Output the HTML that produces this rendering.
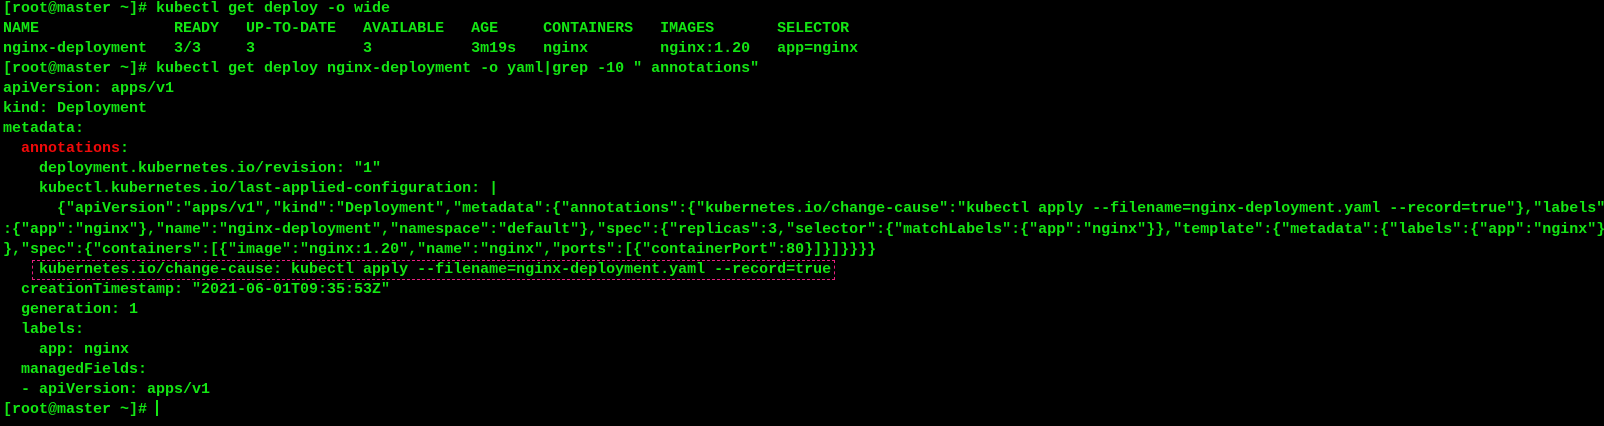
<!DOCTYPE html>
<html><head><meta charset="utf-8"><style>
html,body{margin:0;padding:0;background:#000;width:1604px;height:426px;overflow:hidden}
pre{margin:0;position:absolute;left:3px;top:-1px;font-family:"Liberation Mono",monospace;font-size:15px;line-height:20.05px;color:#14e614;font-weight:bold;white-space:pre}
.r{color:#f00a0a}
.box{position:absolute;left:32px;top:260px;width:801px;height:18px;border:1.5px dashed #e8207f}
.cur{display:inline-block;width:2px;height:16px;background:#14e614;vertical-align:-3px}
</style></head><body>
<pre>[root@master ~]# kubectl get deploy -o wide
NAME               READY   UP-TO-DATE   AVAILABLE   AGE     CONTAINERS   IMAGES       SELECTOR
nginx-deployment   3/3     3            3           3m19s   nginx        nginx:1.20   app=nginx
[root@master ~]# kubectl get deploy nginx-deployment -o yaml|grep -10 " annotations"
apiVersion: apps/v1
kind: Deployment
metadata:
  <span class="r">annotations</span>:
    deployment.kubernetes.io/revision: "1"
    kubectl.kubernetes.io/last-applied-configuration: |
      {"apiVersion":"apps/v1","kind":"Deployment","metadata":{"annotations":{"kubernetes.io/change-cause":"kubectl apply --filename=nginx-deployment.yaml --record=true"},"labels"
:{"app":"nginx"},"name":"nginx-deployment","namespace":"default"},"spec":{"replicas":3,"selector":{"matchLabels":{"app":"nginx"}},"template":{"metadata":{"labels":{"app":"nginx"}
},"spec":{"containers":[{"image":"nginx:1.20","name":"nginx","ports":[{"containerPort":80}]}]}}}}
    kubernetes.io/change-cause: kubectl apply --filename=nginx-deployment.yaml --record=true
  creationTimestamp: "2021-06-01T09:35:53Z"
  generation: 1
  labels:
    app: nginx
  managedFields:
  - apiVersion: apps/v1
[root@master ~]# <span class="cur"></span></pre>
<div class="box"></div>
</body></html>
